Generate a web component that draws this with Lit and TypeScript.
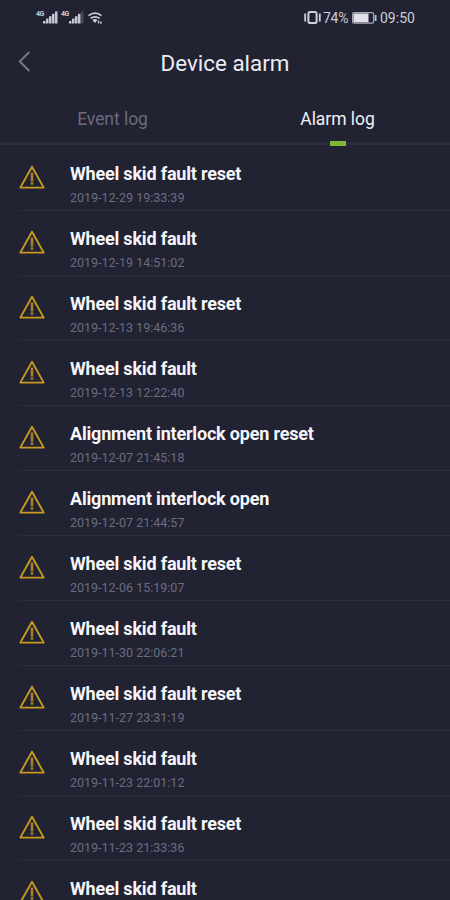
import { LitElement, html, css, svg, nothing } from "lit";
import { customElement, property } from "lit/decorators.js";

interface Alarm {
  title: string;
  time?: string;
}

const ALARMS: Alarm[] = [
  { title: "Wheel skid fault reset", time: "2019-12-29 19:33:39" },
  { title: "Wheel skid fault", time: "2019-12-19 14:51:02" },
  { title: "Wheel skid fault reset", time: "2019-12-13 19:46:36" },
  { title: "Wheel skid fault", time: "2019-12-13 12:22:40" },
  { title: "Alignment interlock open reset", time: "2019-12-07 21:45:18" },
  { title: "Alignment interlock open", time: "2019-12-07 21:44:57" },
  { title: "Wheel skid fault reset", time: "2019-12-06 15:19:07" },
  { title: "Wheel skid fault", time: "2019-11-30 22:06:21" },
  { title: "Wheel skid fault reset", time: "2019-11-27 23:31:19" },
  { title: "Wheel skid fault", time: "2019-11-23 22:01:12" },
  { title: "Wheel skid fault reset", time: "2019-11-23 21:33:36" },
  { title: "Wheel skid fault" },
];

const bars = (lit: number) =>
  [0, 1, 2, 3, 4].map(
    (i) => svg`<rect x=${i * 3} y=${10 - i * 2.4} width="2.5" height=${2.5 + i * 2.4}
      fill=${i < lit ? "#c6c6d2" : "#454659"} />`
  );

@customElement("status-bar")
class StatusBar extends LitElement {
  static styles = css`
    :host {
      display: flex;
      justify-content: space-between;
      height: 36px;
      padding: 0 34px 0 36px;
      box-sizing: border-box;
      color: #cbcbd5;
      font-size: 14px;
      line-height: 36px;
    }
    .group {
      display: flex;
      align-items: flex-start;
    }
    .net {
      font-size: 7px;
      font-weight: 700;
      line-height: 8px;
      margin-top: 10px;
      width: 8px;
      letter-spacing: -0.4px;
    }
    .signal {
      margin: 11px 3px 0 -1px;
    }
    .second {
      margin-left: 0;
    }
    .wifi {
      margin: 12px 0 0 1px;
    }
    .vibrate {
      margin: 11px 2px 0 0;
    }
    .percent {
      width: 27px;
      letter-spacing: -0.3px;
    }
    .battery {
      margin: 12px 2px 0 2px;
    }
    .clock {
      width: 36px;
      white-space: nowrap;
    }
  `;
  render() {
    return html`
      <div class="group">
        <span class="net">4G</span>
        <svg class="signal" width="15" height="13" viewBox="0 0 15 13">${bars(5)}</svg>
        <span class="net">4G</span>
        <svg class="signal second" width="15" height="13" viewBox="0 0 15 13">${bars(4)}</svg>
        <svg class="wifi" width="15" height="13" viewBox="0 0 15 13" fill="none" stroke="#cfcfda" stroke-width="1.7">
          <path d="M.5 3.6Q7 -1.2 13.5 3.6M2.6 6.4Q7 3.2 11.6 6.4" />
          <path d="M4.4 8Q7 6.2 9.4 8L7 11Z" fill="#cfcfda" stroke="none" />
          <path d="M10.6 8.6v3M13 9.4v2.4" stroke-width="1.4" />
        </svg>
      </div>
      <div class="group">
        <svg class="vibrate" width="17" height="13" viewBox="0 0 17 13" fill="none" stroke="#cfcfda">
          <rect x="4.4" y="1" width="8.2" height="11" rx="1.8" stroke-width="2" />
          <path d="M1.2 2.6v8M15.8 2.6v8" stroke-width="1.8" />
        </svg>
        <span class="percent">74%</span>
        <svg class="battery" width="26" height="12" viewBox="0 0 26 12">
          <rect x=".6" y=".6" width="21" height="10.6" rx="1.5" fill="none" stroke="#a9a9b8" stroke-width="1.2" />
          <rect x="1.5" y="1.5" width="15" height="8.8" fill="#e2e2e8" />
          <path d="M23.6 3v6" stroke="#bfbfcc" stroke-width="1.8" />
        </svg>
        <span class="clock">09:50</span>
      </div>
    `;
  }
}

@customElement("alarm-row")
class AlarmRow extends LitElement {
  @property({ attribute: false }) alarm!: Alarm;

  static styles = css`
    :host {
      display: flex;
      height: 65px;
      flex: none;
      margin-left: 19px;
      box-sizing: border-box;
      border-bottom: 1px solid #2b2c3d;
    }
    .icon {
      flex: none;
      margin: 19px 25px 0 0;
    }
    .body {
      padding-top: 17px;
      white-space: nowrap;
    }
    .title {
      color: #f6f6fa;
      font-size: 18px;
      font-weight: 700;
      line-height: 22px;
      letter-spacing: -0.19px;
    }
    .time {
      color: #6c6d80;
      font-size: 12.5px;
      line-height: 16px;
      margin-top: 5px;
    }
  `;
  render() {
    return html`
      <svg class="icon" width="26" height="25" viewBox="0 0 26 25" fill="none" stroke="#c79a20">
        <path d="M13 1.8L24.7 22.6H1.3Z" stroke-width="1.9" stroke-linejoin="round" />
        <path d="M13 7.5V16.5M13 17.3V19.8" stroke="#a5812f" stroke-width="2.6" />
      </svg>
      <div class="body">
        <div class="title">${this.alarm.title}</div>
        ${this.alarm.time ? html`<div class="time">${this.alarm.time}</div>` : nothing}
      </div>
    `;
  }
}

@customElement("app-root")
class AppRoot extends LitElement {
  static styles = css`
    :host {
      display: flex;
      flex-direction: column;
      height: 900px;
      overflow: hidden;
      background: #212232;
      font-family: Roboto, "Liberation Sans", sans-serif;
    }
    .header {
      display: grid;
      grid-template-columns: 50px 1fr 50px;
      height: 54px;
      flex: none;
      align-items: center;
    }
    .back {
      margin: -3px 0 0 18px;
    }
    .heading {
      text-align: center;
      color: #ececf2;
      font-size: 22.4px;
      line-height: 30px;
    }
    .tabs {
      display: grid;
      grid-template-columns: 1fr 1fr;
      height: 56px;
      flex: none;
      box-sizing: border-box;
    }
    .tab {
      display: flex;
      flex-direction: column;
      align-items: center;
      justify-content: space-between;
      padding-top: 18px;
      font-size: 17.5px;
      line-height: 22px;
      letter-spacing: -0.05px;
      color: #6a6b7e;
      background: linear-gradient(#2d2e3f, #2d2e3f) 0 52px / 100% 3px no-repeat;
    }
    .tab.active {
      color: #f0f0f5;
    }
    .mark {
      width: 16px;
      height: 5px;
      background: #7fb53a;
    }
    .list {
      display: flex;
      flex-direction: column;
      min-height: 0;
      overflow: hidden;
    }
  `;
  render() {
    return html`
      <status-bar></status-bar>
      <div class="header">
        <svg class="back" width="13" height="21" viewBox="0 0 13 21" fill="none" stroke="#77788a" stroke-width="1.9">
          <path d="M11.3 1L1.8 10.5L11.3 20" />
        </svg>
        <div class="heading">Device alarm</div>
      </div>
      <div class="tabs">
        <div class="tab">Event log</div>
        <div class="tab active">Alarm log<span class="mark"></span></div>
      </div>
      <div class="list">
        ${ALARMS.map((a) => html`<alarm-row .alarm=${a}></alarm-row>`)}
      </div>
    `;
  }
}
